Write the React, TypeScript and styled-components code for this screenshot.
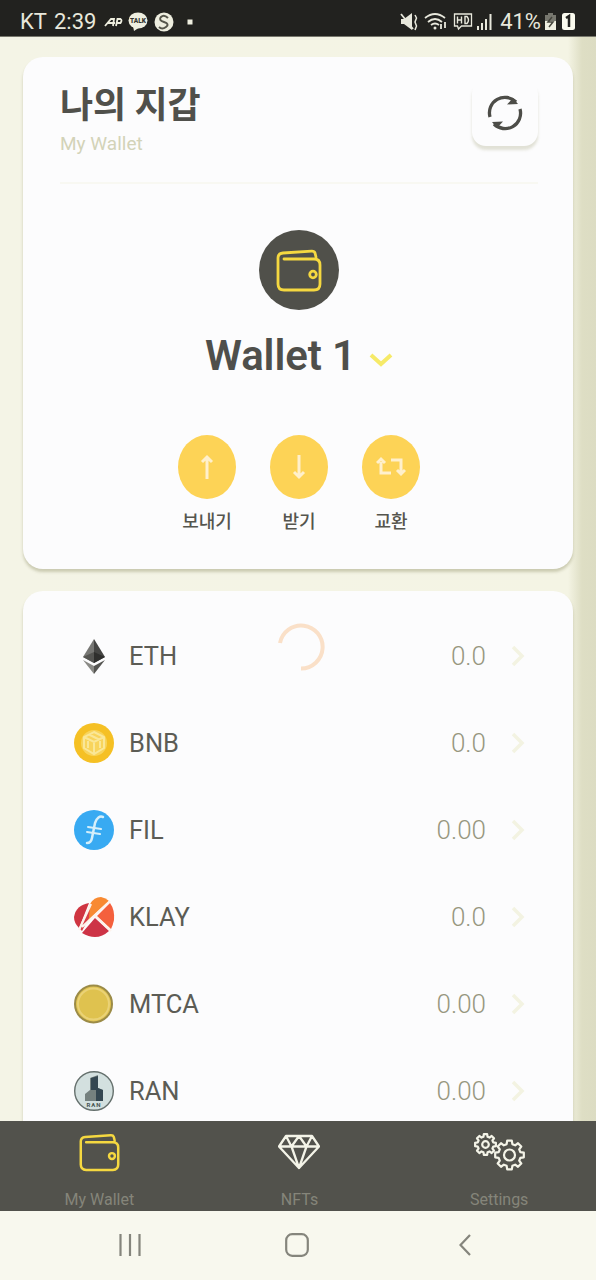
import React from "react";
import styled, { createGlobalStyle } from "styled-components";

const GlobalStyle = createGlobalStyle`
  * { box-sizing: border-box; }
  html, body { margin: 0; padding: 0; }
  body { font-family: Roboto, "Noto Sans CJK KR", sans-serif; background: #f4f4e4; }
  svg { display: block; flex: none; }
`;

const Screen = styled.div`
  width: 596px;
  height: 1280px;
  display: flex;
  flex-direction: column;
  overflow: hidden;
  background: linear-gradient(to right, #f4f4e6 0, #f4f4e4 568px, #dedec4 582px, #dcdcc3 596px);
`;

const StatusBar = styled.header`
  flex: none;
  height: 37px;
  padding: 7px 20px 0 20px;
  display: flex;
  align-items: center;
  justify-content: space-between;
  background: #22221f;
  border-bottom: 1px solid #77776c;
  color: #e8e8dc;
`;

const StatusGroup = styled.div<{ $gap: number }>`
  display: flex;
  align-items: center;
  gap: ${(p) => p.$gap}px;
`;

const StatusText = styled.span`
  font-size: 22px;
  line-height: 28px;
`;

const Content = styled.main`
  flex: 1;
  min-height: 0;
  padding: 20px 23px 0;
  display: flex;
  flex-direction: column;
  gap: 22px;
  overflow: hidden;
`;

const Card = styled.section`
  flex: none;
  background: #fcfcfd;
  border-radius: 20px;
  box-shadow: 0 3px 3px rgba(110, 110, 60, 0.3);
`;

const WalletCard = styled(Card)`
  height: 512px;
  padding: 0 35px 0 37px;
  display: flex;
  flex-direction: column;
  align-items: center;
`;

const CardHeader = styled.div`
  width: 100%;
  height: 127px;
  padding-top: 20px;
  display: flex;
  justify-content: space-between;
  border-bottom: 2px solid #f8f8f2;
`;

const Titles = styled.div`
  display: flex;
  flex-direction: column;
`;

const Title = styled.h1`
  margin: -1px 0 0;
  font: 700 36px/52px "Noto Sans CJK KR", sans-serif;
  color: #50504b;
`;

const Subtitle = styled.span`
  margin-top: 3px;
  font-size: 19px;
  line-height: 26px;
  color: #d3d3b8;
`;

const RefreshButton = styled.button`
  width: 66px;
  height: 66px;
  margin: 3px 0 0;
  padding: 0;
  border: 0;
  border-radius: 14px;
  background: #fcfcfd;
  box-shadow: 0 4px 3px rgba(120, 120, 60, 0.2);
  display: flex;
  align-items: center;
  justify-content: center;
`;

const Avatar = styled.div`
  width: 80px;
  height: 80px;
  margin-top: 46px;
  border-radius: 50%;
  background: #50504a;
  display: flex;
  align-items: center;
  justify-content: center;
`;

const WalletName = styled.div`
  margin-top: 21px;
  display: flex;
  align-items: center;
  gap: 13px;
  font-size: 42px;
  line-height: 50px;
  font-weight: 600;
  letter-spacing: -0.1px;
  color: #4f4f4b;

  svg { margin-top: 7px; }
`;

const Actions = styled.div`
  width: 276px;
  margin-top: 54px;
  display: grid;
  grid-template-columns: repeat(3, 1fr);
`;

const Action = styled.div`
  display: flex;
  flex-direction: column;
  align-items: center;
`;

const ActionDisc = styled.div`
  width: 58px;
  height: 64px;
  border-radius: 50%;
  background: #fdd356;
  display: flex;
  align-items: center;
  justify-content: center;
`;

const ActionLabel = styled.span`
  margin-top: 8px;
  font: 500 18px/27px "Noto Sans CJK KR", sans-serif;
  color: #55554e;
`;

const TokenCard = styled(Card)`
  position: relative;
  height: 600px;
  padding-top: 21px;
`;

const Spinner = styled.div`
  position: absolute;
  left: 252px;
  top: 31px;
`;

const TokenRow = styled.div`
  height: 87px;
  padding: 0 48px 0 50px;
  display: flex;
  align-items: center;
`;

const TokenName = styled.span`
  margin-left: 14px;
  flex: 1;
  font-size: 25.5px;
  color: #5c5c55;
`;

const TokenAmount = styled.span`
  margin-right: 25px;
  font-size: 26px;
  font-weight: 300;
  color: #97977f;
`;

const TabBar = styled.nav`
  flex: none;
  height: 90px;
  display: grid;
  grid-template-columns: repeat(3, 1fr);
  background: #52524c;
`;

const Tab = styled.div`
  display: flex;
  flex-direction: column;
  align-items: center;
`;

const TabIcon = styled.div<{ $shift?: number }>`
  height: 67px;
  padding-top: 11px;
  padding-left: ${(p) => p.$shift ?? 0}px;
`;

const TabLabel = styled.span<{ $shift?: number }>`
  padding-left: ${(p) => p.$shift ?? 0}px;
  font-size: 16px;
  line-height: 24px;
  color: #85857a;
`;

const SystemNav = styled.footer`
  flex: none;
  height: 69px;
  padding-bottom: 2px;
  display: grid;
  grid-template-columns: 260px 74px 262px;
  align-items: center;
  justify-items: center;
  background: #f8f8ee;
`;

const WalletIcon = ({ width, height }: { width: number; height: number }) => (
  <svg width={width} height={height} viewBox="0 0 46 43" fill="none" stroke="#f5d840" strokeWidth="2.8" strokeLinecap="round" strokeLinejoin="round">
    <path d="M40 8 39 4q-.7-2-3.5-1.8L7 4Q2 4.500 2 9v26q0 6 6 6h30q6 0 6-6V16q0-6-6-6H8" />
    <circle cx="37" cy="25.500" r="3.300" />
  </svg>
);

const gearPath = (cx: number, cy: number, outer: number, inner: number) => {
  const points: string[] = [];
  for (let i = 0; i < 8; i++) {
    const base = (i * Math.PI) / 4;
    [[-0.26, inner], [-0.16, outer], [0.16, outer], [0.26, inner]].forEach(([offset, r]) => {
      const a = base + offset;
      points.push(`${(cx + r * Math.sin(a)).toFixed(2)} ${(cy - r * Math.cos(a)).toFixed(2)}`);
    });
  }
  return `M${points.join("L")}Z`;
};

const GearsIcon = () => (
  <svg width="52" height="40" viewBox="0 0 52 40" fill="none" stroke="#f4f4e8" strokeWidth="2.200" strokeLinejoin="round">
    <path d={gearPath(11.5, 12.5, 10.5, 8)} />
    <circle cx="11.500" cy="12.500" r="3.300" />
    <path d={gearPath(35.5, 23, 14.5, 11.2)} />
    <circle cx="35.500" cy="23" r="5.500" />
  </svg>
);

const DiamondIcon = () => (
  <svg width="42" height="38" viewBox="0 0 42 38" fill="none" stroke="#f4f4e8" strokeWidth="2.300" strokeLinejoin="round">
    <path d="M8 4h26l7 10.500L21 36 1 14.500ZM1 14.500h40M8 4l5.500 10.500L21 4l7.500 10.500L34 4M13.500 14.500 21 36l7.500-21.500" />
  </svg>
);

const RefreshIcon = () => (
  <svg width="36" height="36" viewBox="0 0 36 36" fill="none" stroke="#4d4d48" strokeWidth="3.300">
    <path d="M3 22A15.500 15.500 0 0 1 29 7M33 14A15.500 15.500 0 0 1 7 29" />
    <path d="M20 9.500 31 9l-5-6ZM16 26.500 5 27l5 6Z" fill="#4d4d48" stroke="none" />
  </svg>
);

const StatusLeftIcons = () => (
  <svg width="92" height="22" viewBox="0 0 92 22" fill="#eeeedf">
    <path d="M2 15 8 8h3l-1 7M5 12h7M13 15l1.500-7h3q2 1 0 4h-3" fill="none" stroke="#eeeedf" strokeWidth="1.800" />
    <ellipse cx="35" cy="9.500" rx="9.500" ry="8" />
    <path d="m30 15 1 5 6-4Z" />
    <text x="35" y="12" textAnchor="middle" fontSize="6.500" fontWeight="900" fill="#33332e">TALK</text>
    <circle cx="61" cy="11" r="9.500" />
    <path d="M65 7q-4-4-7-1t3 5 2 5-7 0" fill="none" stroke="#55554a" strokeWidth="2" />
    <rect x="84.500" y="8.500" width="5" height="5" />
  </svg>
);

const StatusRightIcons = () => (
  <svg width="96" height="22" viewBox="-1 0 96 22" fill="none" stroke="#e8e8dc" strokeWidth="1.800">
    <path d="M4 8h3l8-6v17l-8-6H4Z" fill="#e8e8dc" stroke="none" />
    <path d="m4 3 12 15" />
    <path d="m18 4 1.500 3-1.500 4 1.500 4-1.500 4" strokeWidth="1.500" />
    <path d="M28 7q10-8 20 0M31 11q7-6 14 0M34 14q4-3 8 0" />
    <circle cx="38" cy="17" r="1.500" fill="#e8e8dc" stroke="none" />
    <path d="M44 13v5M48 11v6" />
    <path d="M57.500 3h17v12h-10l-3 3-1-3h-3Z" strokeWidth="1.300" />
    <path d="M60.500 5.500v7M64.500 5.500v7M60.500 9h4M68 5.500v7h2q3-3.500 0-7Z" strokeWidth="1.400" />
    <path d="M81 15v4M85 12v7M89 8v11M93.500 3v16" strokeWidth="2" />
  </svg>
);

const BatteryIcons = () => (
  <svg width="32" height="20" viewBox="0 0 32 20">
    <path d="M1 3h3V1h5v2h3v6H1Z" fill="#77776e" />
    <path d="M1 9h11v9H1Z" fill="#f0f0e2" />
    <path d="M8 5 4 10h5l-4 5" fill="none" stroke="#44443c" strokeWidth="1.500" />
    <rect x="18" y="1" width="13" height="17" rx="2.500" fill="#fafaee" />
    <path d="m22 6 3-2v11" fill="none" stroke="#22221f" strokeWidth="2.500" />
  </svg>
);

const EthIcon = () => (
  <svg width="42" height="42" viewBox="0 0 42 42">
    <path d="M21 4 10 22l11 6Z" fill="#777774" />
    <path d="m21 4 11 18-11 6Z" fill="#454543" />
    <path d="m10 22 11-5v11Z" fill="#555552" />
    <path d="m32 22-11-5v11Z" fill="#2f2f2d" />
    <path d="m10 25 11 6v8Z" fill="#8a8a86" />
    <path d="m32 25-11 6v8Z" fill="#555552" />
  </svg>
);

const BnbIcon = () => (
  <svg width="42" height="42" viewBox="0 0 42 42">
    <circle cx="21" cy="21" r="20" fill="#f5c024" />
    <circle cx="21" cy="21" r="13" fill="#f8d45c" />
    <path d="m21 10 10 5v11l-10 6-10-6V15Zm-10 5 10 5 10-5M21 20v12M16 12.500l10 5M15 19v7M27 19v7" fill="none" stroke="#fae797" strokeWidth="2" />
  </svg>
);

const FilIcon = () => (
  <svg width="42" height="42" viewBox="0 0 42 42" fill="none" stroke="#d5effa" strokeLinecap="round">
    <circle cx="21" cy="21" r="20" fill="#38aaf2" stroke="none" />
    <path d="M30 8q-5-2-8 6l-3 15q-1 5-5 5" strokeWidth="2.500" />
    <path d="m15 18 13 2M14 23l13 2" strokeWidth="2" />
  </svg>
);

const KlayIcon = () => (
  <svg width="42" height="42" viewBox="0 0 42 42">
    <path d="M16 7Q3 9 1 21q0 6 5 11Z" fill="#cf3541" />
    <path d="M17 8q4-7 11-7 5 1 8 4L10 29Z" fill="#f88a32" />
    <path d="M37 7q5 7 4 17-1 5-3 9L24 20Z" fill="#f4603d" />
    <path d="M22 22 36 35q-12 11-27 2Z" fill="#cd3346" />
    <path d="M17 9 7 33l2 2 7-13Z" fill="#d94047" />
    <path d="M18 8 6 34M37 5 9 31M22 20l16 15" fill="none" stroke="#fdf3ec" strokeWidth="2.200" />
  </svg>
);

const MtcaIcon = () => (
  <svg width="42" height="42" viewBox="0 0 42 42">
    <circle cx="20.500" cy="21" r="18.500" fill="#dfc24f" stroke="#9b8b47" strokeWidth="2" />
    <circle cx="20.500" cy="21" r="15.500" fill="none" stroke="#ead276" strokeWidth="2" />
  </svg>
);

const RanIcon = () => (
  <svg width="42" height="42" viewBox="0 0 42 42">
    <circle cx="21" cy="21" r="19.300" fill="#d3e0df" stroke="#65706d" strokeWidth="1.400" />
    <path d="M12 31V24l5-4V8l8-3v13l5 2v11Z" fill="#75817f" />
    <path d="M18 8l7-2v12l5 2v11h-7V20h-5Z" fill="#344751" />
    <text x="21" y="37" textAnchor="middle" fontSize="6" fontWeight="700" letterSpacing="1" fill="#44534f">RAN</text>
  </svg>
);

const tokens = [
  { name: "ETH", amount: "0.0", Icon: EthIcon },
  { name: "BNB", amount: "0.0", Icon: BnbIcon },
  { name: "FIL", amount: "0.00", Icon: FilIcon },
  { name: "KLAY", amount: "0.0", Icon: KlayIcon },
  { name: "MTCA", amount: "0.00", Icon: MtcaIcon },
  { name: "RAN", amount: "0.00", Icon: RanIcon },
];

const actions = [
  { label: "보내기", d: "M14 26V5M9 9l5-5 5 5" },
  { label: "받기", d: "M14 2v21M9 19l5 5 5-5" },
  { label: "교환", d: "M4 9v11h10M0 10l4-4 4 4M14 7h10v12M20 17l4 4 4-4" },
];

export default function App() {
  return (
    <Screen>
      <GlobalStyle />
      <StatusBar>
        <StatusGroup $gap={7}>
          <StatusText>KT</StatusText>
          <StatusText>2:39</StatusText>
          <StatusLeftIcons />
        </StatusGroup>
        <StatusGroup $gap={3}>
          <StatusRightIcons />
          <StatusText>&nbsp;41%</StatusText>
          <BatteryIcons />
        </StatusGroup>
      </StatusBar>
      <Content>
        <WalletCard>
          <CardHeader>
            <Titles>
              <Title>나의 지갑</Title>
              <Subtitle>My Wallet</Subtitle>
            </Titles>
            <RefreshButton aria-label="새로고침">
              <RefreshIcon />
            </RefreshButton>
          </CardHeader>
          <Avatar>
            <WalletIcon width={46} height={43} />
          </Avatar>
          <WalletName>
            Wallet 1
            <svg width="24" height="14" viewBox="0 0 24 14" fill="none" stroke="#f6ea68" strokeWidth="4">
              <path d="m2 2 10 9L22 2" />
            </svg>
          </WalletName>
          <Actions>
            {actions.map((a) => (
              <Action key={a.label}>
                <ActionDisc>
                  <svg width="30" height="28" viewBox="-1 0 30 28" fill="none" stroke="#fff0cc" strokeWidth="3">
                    <path d={a.d} />
                  </svg>
                </ActionDisc>
                <ActionLabel>{a.label}</ActionLabel>
              </Action>
            ))}
          </Actions>
        </WalletCard>
        <TokenCard>
          <Spinner>
            <svg width="50" height="50" viewBox="0 0 50 50" fill="none" stroke="#fae0c8" strokeWidth="4">
              <path d="M5 21A21.500 21.500 0 1 1 26 46.500" />
            </svg>
          </Spinner>
          {tokens.map(({ name, amount, Icon }) => (
            <TokenRow key={name}>
              <Icon />
              <TokenName>{name}</TokenName>
              <TokenAmount>{amount}</TokenAmount>
              <svg width="14" height="22" viewBox="0 0 14 22" fill="none" stroke="#f3f3e2" strokeWidth="3.500">
                <path d="m2 2 9 9-9 9" />
              </svg>
            </TokenRow>
          ))}
        </TokenCard>
      </Content>
      <TabBar>
        <Tab>
          <TabIcon $shift={1}><WalletIcon width={41} height={41} /></TabIcon>
          <TabLabel>My Wallet</TabLabel>
        </Tab>
        <Tab>
          <TabIcon $shift={3}><DiamondIcon /></TabIcon>
          <TabLabel $shift={3}>NFTs</TabLabel>
        </Tab>
        <Tab>
          <TabIcon $shift={7}><GearsIcon /></TabIcon>
          <TabLabel $shift={5}>Settings</TabLabel>
        </Tab>
      </TabBar>
      <SystemNav>
        <svg width="22" height="22" viewBox="0 0 22 22" stroke="#85857c" strokeWidth="2.200">
          <path d="M1.500 0v22M11 0v22M20.500 0v22" />
        </svg>
        <svg width="24" height="24" viewBox="0 0 24 24" fill="none" stroke="#85857c" strokeWidth="2.200">
          <rect x="1.200" y="1.200" width="21.600" height="21.600" rx="6" />
        </svg>
        <svg width="12" height="22" viewBox="0 0 12 22" fill="none" stroke="#85857c" strokeWidth="2.200">
          <path d="M11 1 1.500 11 11 21" />
        </svg>
      </SystemNav>
    </Screen>
  );
}
